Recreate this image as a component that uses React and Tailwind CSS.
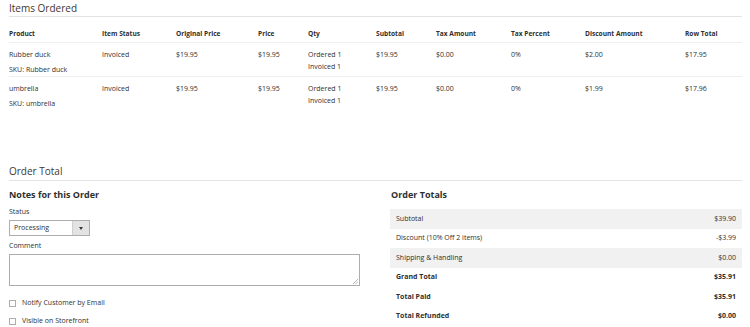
import React from "react";

const cols = "grid grid-cols-[93px_74px_82px_50px_68px_60px_75px_74px_100px_57px]";

const items = [
  { name: "Rubber duck", sku: "Rubber duck", status: "Invoiced", orig: "$19.95", price: "$19.95", subtotal: "$19.95", tax: "$0.00", taxPct: "0%", discount: "$2.00", total: "$17.95" },
  { name: "umbrella", sku: "umbrella", status: "Invoiced", orig: "$19.95", price: "$19.95", subtotal: "$19.95", tax: "$0.00", taxPct: "0%", discount: "$1.99", total: "$17.96" },
];

const headers = ["Product", "Item Status", "Original Price", "Price", "Qty", "Subtotal", "Tax Amount", "Tax Percent", "Discount Amount", "Row Total"];

const totals = [
  { label: "Subtotal", value: "$39.90", gray: true },
  { label: "Discount (10% Off 2 items)", value: "-$3.99" },
  { label: "Shipping & Handling", value: "$0.00", gray: true },
  { label: "Grand Total", value: "$35.91", bold: true },
  { label: "Total Paid", value: "$35.91", bold: true },
  { label: "Total Refunded", value: "$0.00", bold: true },
];

function Checkbox({ label }) {
  return (
    <div className="flex items-center gap-[6px] h-[10px]">
      <span className="w-[7px] h-[7px] border border-[#adadad] bg-white"></span>
      <span>{label}</span>
    </div>
  );
}

export default function App() {
  return (
    <div className="w-[750px] h-[327px] overflow-hidden bg-white pl-[9px] pr-[8px] text-[7px] leading-[10px] text-[#303030]" style={{ fontFamily: '"Open Sans", sans-serif' }}>
      {/* Items Ordered */}
      <div className="pt-[2px] h-[17px] border-b border-[#e3e3e3] text-[10px] leading-[13px] text-[#41362f]">Items Ordered</div>

      <div className={`${cols} h-[26px] items-end pb-[3px] border-b border-[#efefef] font-bold text-[6.6px]`}>
        {headers.map((h) => (
          <div key={h}>{h}</div>
        ))}
      </div>

      {items.map((it, i) => (
        <div key={it.name} className={`${cols} h-[34px] pt-[7px] ${i === 0 ? "border-b border-[#efefef]" : ""}`}>
          <div>
            <div>{it.name}</div>
            <div className="mt-[5px]">SKU: {it.sku}</div>
          </div>
          <div>{it.status}</div>
          <div>{it.orig}</div>
          <div>{it.price}</div>
          <div>
            <div>Ordered 1</div>
            <div className="mt-[2px]">Invoiced 1</div>
          </div>
          <div>{it.subtotal}</div>
          <div>{it.tax}</div>
          <div>{it.taxPct}</div>
          <div>{it.discount}</div>
          <div>{it.total}</div>
        </div>
      ))}

      {/* Order Total */}
      <div className="mt-[53px] pt-[1px] h-[17px] border-b border-[#e3e3e3] text-[10px] leading-[13px] text-[#41362f]">Order Total</div>

      <div className="grid grid-cols-[351px_352px] gap-[30px] mt-[8px]">
        <div>
          <div className="text-[9px] leading-[12px] font-bold text-[#303030]">Notes for this Order</div>
          <div className="mt-[6px]">Status</div>
          <div className="mt-[3px] w-[81px] h-[16px] border border-[#adadad] flex">
            <div className="flex-1 pl-[4px] flex items-center">Processing</div>
            <div className="w-[17px] bg-[#e3e3e3] border-l border-[#cfcfcf] flex items-center justify-center">
              <span className="w-0 h-0 border-l-[2px] border-r-[2px] border-t-[3px] border-l-transparent border-r-transparent border-t-[#41362f]"></span>
            </div>
          </div>
          <div className="mt-[5px]">Comment</div>
          <div className="relative mt-[3px] w-[351px] h-[32px] border border-[#adadad]">
            <svg className="absolute right-[1px] bottom-[1px]" width="5" height="5" viewBox="0 0 5 5">
              <path d="M5 0 L0 5 M5 2.5 L2.5 5" stroke="#9a9a9a" strokeWidth="0.7" />
            </svg>
          </div>
          <div className="mt-[12px] flex flex-col gap-[8px]">
            <Checkbox label="Notify Customer by Email" />
            <Checkbox label="Visible on Storefront" />
          </div>
        </div>

        <div>
          <div className="pl-[1px] text-[9px] leading-[12px] font-bold text-[#303030]">Order Totals</div>
          <div className="mt-[8px]">
            {totals.map((t) => (
              <div key={t.label} className={`h-[19.5px] flex items-center justify-between px-[6px] ${t.gray ? "bg-[#f1f1f1]" : ""} ${t.bold ? "font-bold" : ""}`}>
                <span>{t.label}</span>
                <span>{t.value}</span>
              </div>
            ))}
          </div>
        </div>
      </div>
    </div>
  );
}
